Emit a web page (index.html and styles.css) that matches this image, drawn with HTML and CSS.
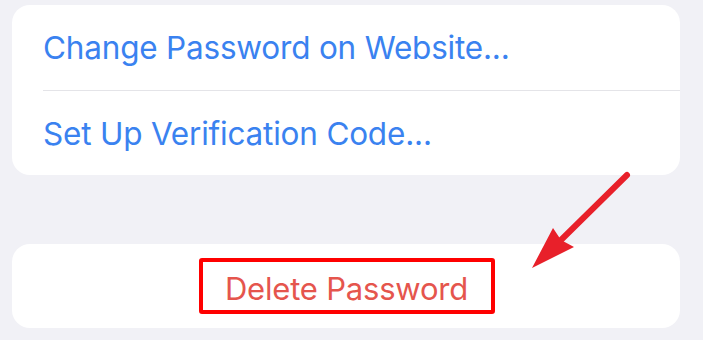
FILE: index.html
```html
<!DOCTYPE html>
<html>
<head>
<meta charset="utf-8">
<link rel="stylesheet" href="styles.css">
</head>
<body>
<div class="page">
  <div class="card">
    <div class="row"><span class="link">Change Password on Website...</span></div>
    <div class="row"><span class="link">Set Up Verification Code...</span></div>
  </div>
  <div class="card danger-card">
    <div class="highlight"><span class="danger">Delete Password</span></div>
  </div>
  <svg class="arrow" width="703" height="340" viewBox="0 0 703 340">
    <line x1="627" y1="175" x2="561" y2="240" stroke="#e8202a" stroke-width="6" stroke-linecap="round"/>
    <polygon points="532,268 553,228 561,240 574,247" fill="#e8202a"/>
  </svg>
</div>
</body>
</html>
```
FILE: styles.css
```css
html, body {
  margin: 0;
  padding: 0;
  background: #f1f1f6;
}
.page {
  position: relative;
  width: 703px;
  height: 340px;
  padding: 5px 23px 0 12px;
  box-sizing: border-box;
  display: flex;
  flex-direction: column;
  font-family: "Inter", "Liberation Sans", sans-serif;
}
.card {
  background: #fff;
  border-radius: 18px;
  display: flex;
  flex-direction: column;
  padding-left: 31px;
}
.row {
  height: 85px;
  display: flex;
  align-items: center;
  box-sizing: border-box;
}
.row + .row {
  border-top: 1.5px solid #e4e4e8;
}
.link {
  color: #3a82f0;
  font-size: 31.5px;
  letter-spacing: -0.2px;
}
.danger-card {
  margin-top: 69px;
  height: 84px;
  padding-left: 0;
  align-items: center;
  justify-content: center;
}
.highlight {
  border: 4px solid #ff0000;
  border-radius: 3px;
  width: 296px;
  height: 56px;
  box-sizing: border-box;
  display: flex;
  align-items: center;
  justify-content: center;
  margin-left: 1px;
}
.danger {
  color: #e5554d;
  font-size: 31px;
  letter-spacing: -0.2px;
  padding-top: 4px;
}
.arrow {
  position: absolute;
  left: 0;
  top: 0;
}
```
